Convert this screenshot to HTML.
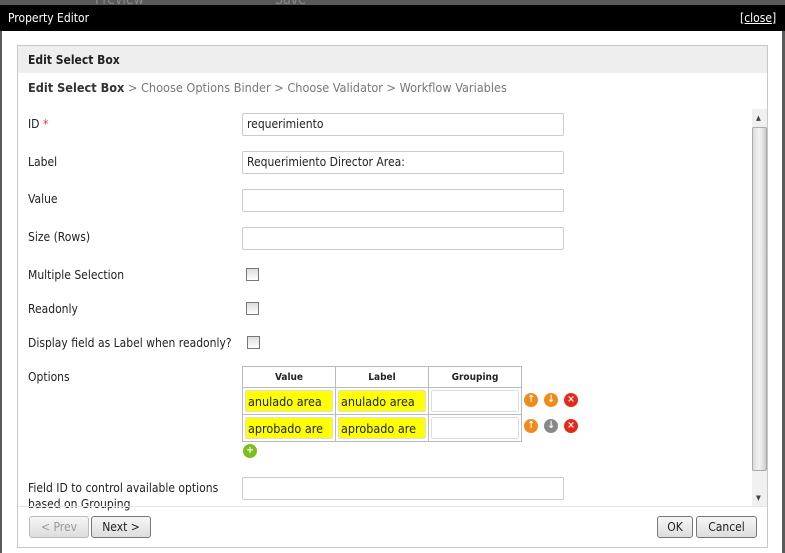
<!DOCTYPE html>
<html><head><meta charset="utf-8"><style>
*{box-sizing:border-box;margin:0;padding:0}
body{width:785px;height:553px;overflow:hidden;background:#5a5a5a;font-family:"DejaVu Sans Condensed","Liberation Sans",sans-serif;font-size:12px;color:#222;position:relative}
.abs{position:absolute}
.bar{left:0;top:5px;width:785px;height:26px;background:#000;color:#fff}
.dlg{left:2px;top:31px;width:780px;height:522px;background:#fff}
.panel{left:17px;top:45px;width:751px;height:503px;border:1px solid #c8c8c8;background:#fff}
.hdr{left:18px;top:46px;width:749px;height:27px;background:#eee}
.lbl{left:28px;font-size:12px}
.inp{left:242px;width:322px;height:23px;border:1px solid #ccc;border-radius:2px;padding:3px 4px;font-size:12px}
.cb{left:246px;width:13px;height:13px;border:1px solid #777;background:linear-gradient(#ddd,#fff)}
table{border-collapse:collapse}
td,th{border:1px solid #bbb;padding:2px}
th{font-size:10px;font-weight:bold;height:21px}
.cell{height:22px;border:1px solid #ddd;border-radius:2px;font-size:12.5px;padding:3px 2px;overflow:hidden;white-space:nowrap}
.y{background:#ff0}
.ic{width:14px;height:14px;border-radius:50%;position:absolute;color:#fff;font-size:10px;line-height:14px;text-align:center;font-weight:bold}
.btn{height:22px;border:1px solid #777;border-radius:3px;background:linear-gradient(#f6f6f6,#ddd);font-size:12px;text-align:center;line-height:20px}
</style></head><body>
<div class="abs" style="left:95px;top:-8px;color:#888;font-size:14px">Preview</div>
<div class="abs" style="left:275px;top:-8px;color:#888;font-size:14px">Save</div>
<div class="abs bar"><span class="abs" style="left:8px;top:6px;font-size:12px">Property Editor</span><span class="abs" style="left:740px;top:6px;font-size:12px;text-decoration:underline">[close]</span></div>
<div class="abs dlg"></div>
<div class="abs panel"></div>
<div class="abs hdr"><span class="abs" style="left:10px;top:7px;font-weight:bold">Edit Select Box</span></div>
<div class="abs" style="left:28px;top:80px;color:#777;font-size:12.6px"><b style="color:#333">Edit Select Box</b> &gt; Choose Options Binder &gt; Choose Validator &gt; Workflow Variables</div>
<div class="abs lbl" style="top:117px">ID <span style="color:#e33">*</span></div>
<div class="abs inp" style="top:113px">requerimiento</div>
<div class="abs lbl" style="top:155px">Label</div>
<div class="abs inp" style="top:151px">Requerimiento Director Area:</div>
<div class="abs lbl" style="top:192px">Value</div>
<div class="abs inp" style="top:189px"></div>
<div class="abs lbl" style="top:230px">Size (Rows)</div>
<div class="abs inp" style="top:227px"></div>
<div class="abs lbl" style="top:268px">Multiple Selection</div>
<div class="abs cb" style="top:268px"></div>
<div class="abs lbl" style="top:302px">Readonly</div>
<div class="abs cb" style="top:302px"></div>
<div class="abs lbl" style="top:336px">Display field as Label when readonly?</div>
<div class="abs cb" style="top:336px;left:247px"></div>
<div class="abs lbl" style="top:370px">Options</div>
<table class="abs" style="left:242px;top:366px;width:280px">
<tr><th style="width:93px">Value</th><th style="width:93px">Label</th><th>Grouping</th></tr>
<tr><td><div class="cell y">anulado area</div></td><td><div class="cell y">anulado area</div></td><td><div class="cell"></div></td></tr>
<tr><td><div class="cell y">aprobado are</div></td><td><div class="cell y">aprobado are</div></td><td><div class="cell"></div></td></tr>
</table>
<div class="ic" style="left:524px;top:393px;background:#f08a1a">↑</div>
<div class="ic" style="left:544px;top:393px;background:#f08a1a">↓</div>
<div class="ic" style="left:564px;top:393px;background:#e62a1a">×</div>
<div class="ic" style="left:524px;top:419px;background:#f08a1a">↑</div>
<div class="ic" style="left:544px;top:419px;background:#888">↓</div>
<div class="ic" style="left:564px;top:419px;background:#e62a1a">×</div>
<div class="ic" style="left:243px;top:444px;background:#7bbf1f">+</div>
<div class="abs lbl" style="top:480px;line-height:16px">Field ID to control available options<br>based on Grouping</div>
<div class="abs inp" style="top:477px"></div>
<div class="abs" style="left:18px;top:506px;width:749px;height:1px;background:#e4e4e4"></div>
<div class="abs" style="left:752px;top:109px;width:15px;height:397px;background:#f0f0f0"></div>
<div class="abs" style="left:756px;top:114px;font-size:7px;color:#444">▲</div>
<div class="abs" style="left:752px;top:127px;width:15px;height:344px;background:linear-gradient(90deg,#ddd,#f4f4f4,#ccc);border:1px solid #aaa;border-radius:2px"></div>
<div class="abs" style="left:756px;top:494px;font-size:7px;color:#444">▼</div>
<div class="abs btn" style="left:29px;top:516px;width:60px;color:#999;border-color:#bbb">&lt; Prev</div>
<div class="abs btn" style="left:91px;top:516px;width:60px">Next &gt;</div>
<div class="abs btn" style="left:657px;top:516px;width:36px">OK</div>
<div class="abs btn" style="left:696px;top:516px;width:61px">Cancel</div>
</body></html>
